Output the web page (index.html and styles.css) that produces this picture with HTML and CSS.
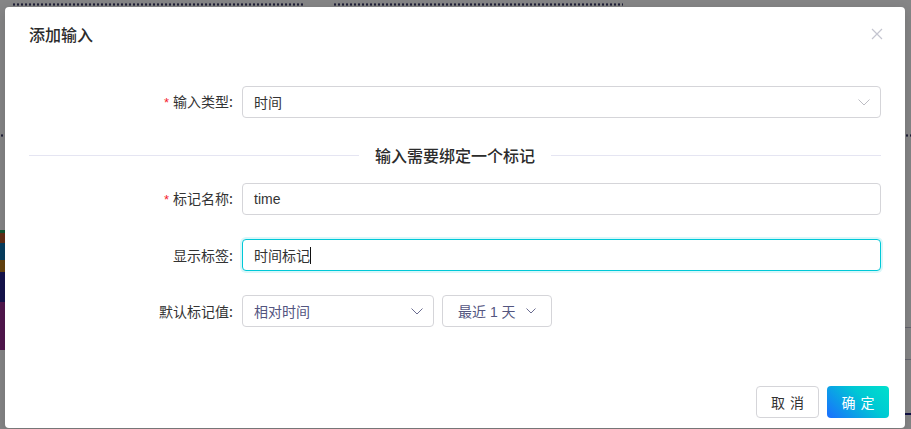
FILE: index.html
```html
<!DOCTYPE html>
<html lang="zh-CN">
<head>
<meta charset="utf-8">
<title>添加输入</title>
<link rel="stylesheet" href="styles.css">
</head>
<body>
<div class="page">
  <div class="dots dots-a"></div>
  <div class="dots dots-b"></div>
  <div class="dots dots-left"></div>
  <div class="dots dots-right"></div>
  <div class="chart-strip">
    <div class="seg seg-green"></div>
    <div class="seg seg-brown"></div>
    <div class="seg seg-blue"></div>
    <div class="seg seg-orange"></div>
    <div class="seg seg-navy"></div>
    <div class="seg seg-purple"></div>
  </div>
  <div class="right-line rl-1"></div>
  <div class="right-line rl-2"></div>
  <div class="right-line rl-3"></div>
</div>
<div class="mask"></div>
<div class="modal">
  <div class="modal-header">
    <div class="modal-title">添加输入</div>
    <button class="modal-close" aria-label="close">
      <svg width="12" height="12" viewBox="0 0 12 12"><path d="M1 1 L11 11 M11 1 L1 11" stroke="#c4c5d0" stroke-width="1.2" fill="none"/></svg>
    </button>
  </div>
  <div class="modal-body">
    <div class="form-row">
      <label class="form-label"><span class="req">*</span>输入类型:</label>
      <div class="form-control">
        <div class="select select-full">
          <span class="select-value">时间</span>
          <svg class="chev" width="12" height="7" viewBox="0 0 12 7"><path d="M0.5 0.5 L6 6 L11.5 0.5" stroke="#bdbdc4" stroke-width="1" fill="none"/></svg>
        </div>
      </div>
    </div>
    <div class="divider"><span class="divider-text">输入需要绑定一个标记</span></div>
    <div class="form-row">
      <label class="form-label"><span class="req">*</span>标记名称:</label>
      <div class="form-control">
        <div class="input"><span class="input-value">time</span></div>
      </div>
    </div>
    <div class="form-row">
      <label class="form-label">显示标签:</label>
      <div class="form-control">
        <div class="input input-focused"><span class="input-value">时间标记</span><span class="caret"></span></div>
      </div>
    </div>
    <div class="form-row">
      <label class="form-label">默认标记值:</label>
      <div class="form-control control-inline">
        <div class="select select-mode">
          <span class="select-value muted">相对时间</span>
          <svg class="chev" width="12" height="7" viewBox="0 0 12 7"><path d="M0.5 0.5 L6 6 L11.5 0.5" stroke="#6a6c90" stroke-width="1" fill="none"/></svg>
        </div>
        <div class="range-btn">
          <span class="muted">最近 1 天</span>
          <svg class="chev-s" width="10" height="6" viewBox="0 0 10 6"><path d="M0.5 0.5 L5 5 L9.5 0.5" stroke="#6a6c90" stroke-width="1" fill="none"/></svg>
        </div>
      </div>
    </div>
  </div>
  <div class="modal-footer">
    <button class="btn">取 消</button>
    <button class="btn btn-primary">确 定</button>
  </div>
</div>
</body>
</html>
```

FILE: styles.css
```css
* { box-sizing: border-box; }
html, body {
  margin: 0;
  padding: 0;
  width: 911px;
  height: 429px;
  overflow: hidden;
}
body {
  font-family: "Liberation Sans", "Noto Sans CJK SC", sans-serif;
  font-size: 14px;
  color: #333;
  background: #f2f2f5;
  position: relative;
}
.page {
  position: absolute;
  inset: 0;
}
.dots {
  position: absolute;
  height: 3px;
  background-image: radial-gradient(circle, #3a3a66 1px, transparent 1.3px);
  background-size: 4px 3px;
}
.dots-a { left: 12px; top: 3px; width: 292px; }
.dots-b { left: 333px; top: 3px; width: 290px; }
.dots-left { left: 0; top: 134px; width: 5px; }
.dots-right { left: 905px; top: 134px; width: 6px; }
.chart-strip {
  position: absolute;
  left: 0;
  top: 230px;
  width: 5px;
  display: flex;
  flex-direction: column;
}
.seg { width: 5px; }
.seg-green { height: 3px; background: #1f9a5c; }
.seg-brown { height: 10px; background: #b5542a; }
.seg-blue { height: 17px; background: #0d72b0; }
.seg-orange { height: 12px; background: #b87a1c; }
.seg-navy { height: 30px; background: #27238c; }
.seg-purple { height: 48px; background: #962a8e; }
.right-line {
  position: absolute;
  left: 905px;
  width: 6px;
  height: 1px;
  background: #b6b6c8;
}
.rl-1 { top: 327px; }
.rl-2 { top: 359px; }
.rl-3 { top: 413px; height: 2px; background: #1b1b7a; }
.mask {
  position: absolute;
  inset: 0;
  background: rgba(0, 0, 0, 0.45);
}
.modal {
  position: absolute;
  left: 5px;
  top: 7px;
  width: 900px;
  background: #fff;
  border-radius: 4px;
  box-shadow: 0 4px 12px rgba(0, 0, 0, 0.15);
}
.modal-header {
  height: 55px;
  padding: 16px 24px;
  display: flex;
  align-items: flex-start;
  justify-content: space-between;
}
.modal-title {
  font-family: "Noto Sans CJK SC", sans-serif;
  font-size: 16px;
  line-height: 22px;
  font-weight: 500;
  color: #2b2b2b;
}
.modal-close {
  border: 0;
  background: none;
  padding: 0;
  margin: 5px -2px 0 0;
  width: 12px;
  height: 12px;
  display: flex;
}
.modal-body {
  padding: 24px 24px 49px 24px;
}
.form-row {
  display: flex;
  align-items: center;
  height: 32px;
  margin-bottom: 24px;
}
.form-row:first-child { margin-bottom: 0; }
.form-row:last-child { margin-bottom: 0; }
.form-label {
  width: 213px;
  flex-shrink: 0;
  padding-right: 9px;
  text-align: right;
  font-family: "Noto Sans CJK SC", sans-serif;
  font-size: 14px;
  color: #333;
  line-height: 20px;
}
.req {
  color: #f5222d;
  font-family: "Liberation Sans", sans-serif;
  margin-right: 4px;
  font-size: 13px;
}
.form-control {
  flex: 1;
  display: flex;
  align-items: center;
}
.control-inline { gap: 8px; }
.select, .input, .range-btn {
  height: 32px;
  border: 1px solid #d5d5d9;
  border-radius: 4px;
  background: #fff;
  display: flex;
  align-items: center;
}
.select {
  padding: 0 10px 0 11px;
  justify-content: space-between;
}
.select-full { width: 100%; }
.select-mode { width: 192px; }
.select-value, .input-value {
  font-family: "Liberation Sans", "Noto Sans CJK SC", sans-serif;
  font-size: 14px;
  color: #333;
}
.muted {
  color: #53557f;
  font-family: "Liberation Sans", "Noto Sans CJK SC", sans-serif;
}
.input {
  width: 100%;
  padding: 0 11px;
}
.input-focused {
  border-color: #00c8d7;
  box-shadow: 0 0 0 2px rgba(0, 200, 215, 0.15);
}
.caret {
  display: inline-block;
  width: 1px;
  height: 17px;
  background: #111;
  margin-left: 0;
}
.range-btn {
  width: 110px;
  padding: 0 15px;
  justify-content: space-between;
}
.divider {
  display: flex;
  align-items: center;
  margin: 25px 0 16px;
  height: 24px;
}
.divider::before, .divider::after {
  content: "";
  flex: 1;
  height: 1px;
  background: #e5e5f2;
}
.divider-text {
  padding: 0 16px;
  font-family: "Noto Sans CJK SC", sans-serif;
  font-size: 16px;
  font-weight: 500;
  line-height: 24px;
  color: #2b2b2b;
}
.modal-footer {
  padding: 10px 16px;
  display: flex;
  justify-content: flex-end;
  gap: 8px;
}
.btn {
  height: 32px;
  width: 63px;
  border: 1px solid #d5d5d9;
  border-radius: 4px;
  background: #fff;
  font-family: "Noto Sans CJK SC", sans-serif;
  font-size: 14px;
  color: #333;
  padding: 0;
  letter-spacing: 1px;
  text-indent: 1px;
}
.btn-primary {
  width: 62px;
  border: 0;
  color: #fff;
  background: linear-gradient(45deg, #1a6dff 0%, #00c8d4 60%, #00e0cc 100%);
}
```
